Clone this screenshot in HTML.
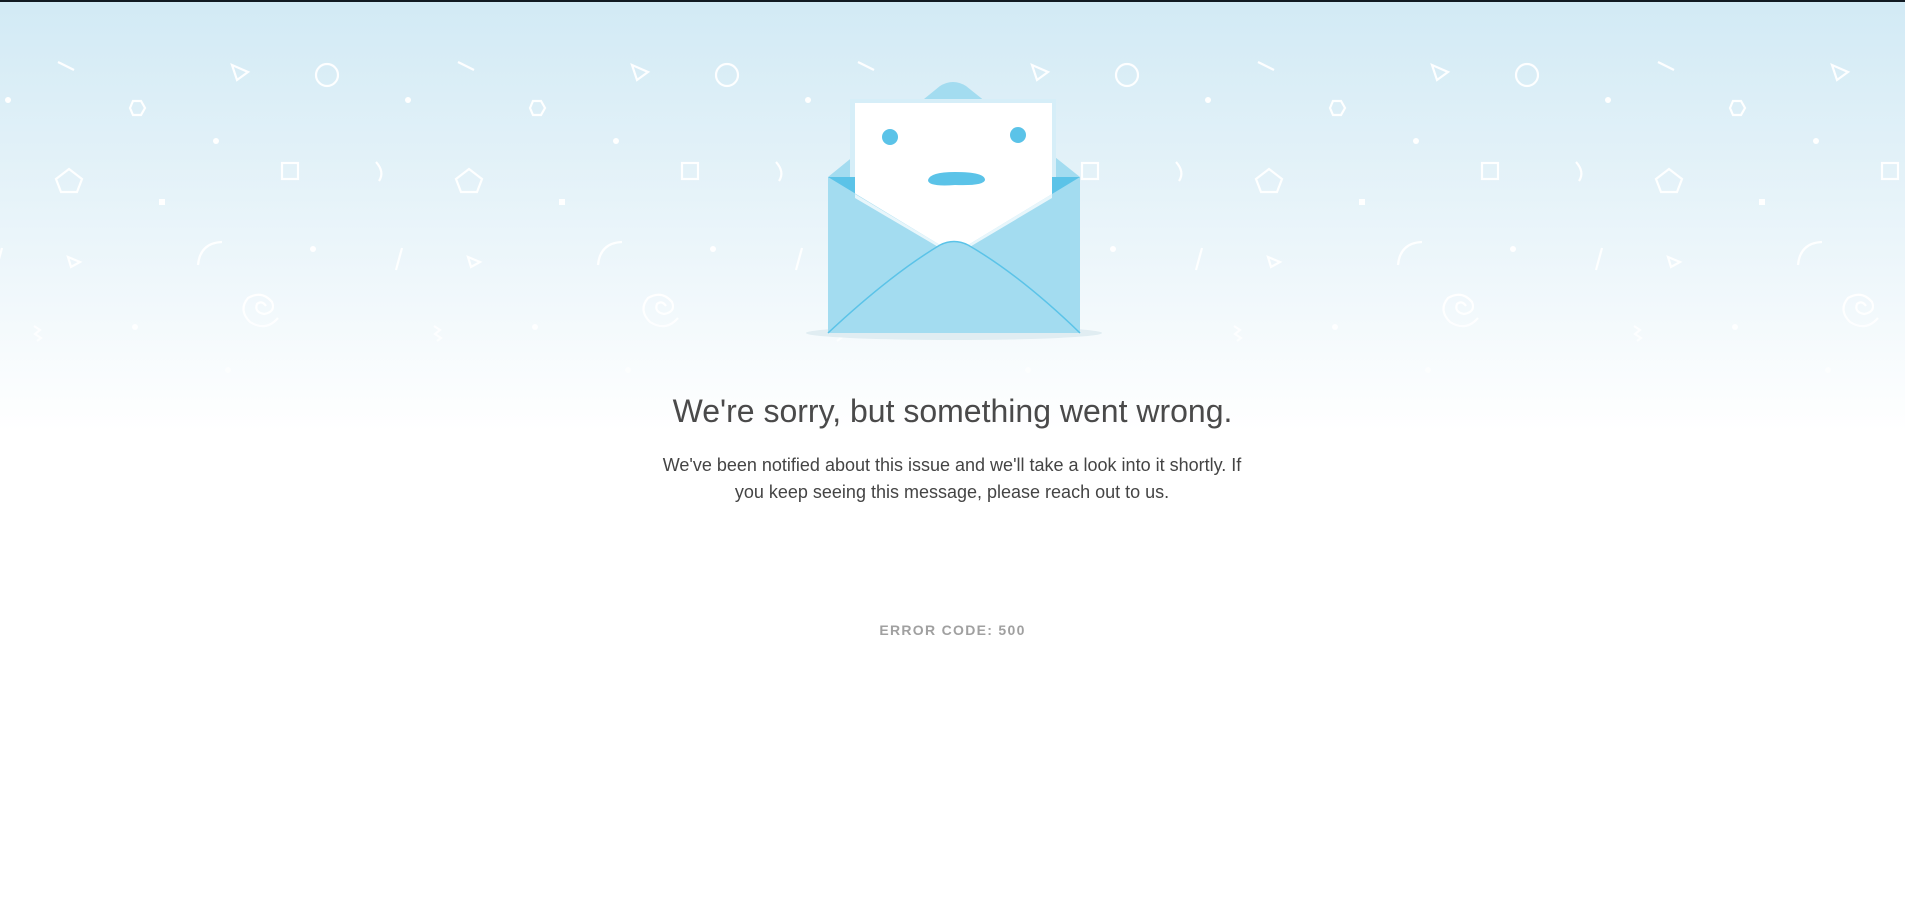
<!DOCTYPE html>
<html><head><meta charset="utf-8"><style>
html,body{margin:0;padding:0;width:1905px;height:904px;overflow:hidden;background:#fff;font-family:"Liberation Sans",Arial,sans-serif}
.top{position:absolute;left:0;top:0;width:1905px;height:2px;background:#111a22}
.bg{position:absolute;left:0;top:2px;width:1905px;height:430px;background:linear-gradient(#d2eaf5 0%,#e6f3f9 45%,#fff 100%)}
svg.p{position:absolute;left:0;top:0}
h1{position:absolute;left:0;width:1905px;top:393px;margin:0;text-align:center;font-weight:normal;font-size:32px;color:#4a4a4a}
p.m{position:absolute;left:652px;width:600px;top:452px;margin:0;text-align:center;font-size:18px;line-height:27px;color:#444}
.ec{position:absolute;left:0;width:1905px;top:622px;text-align:center;font-size:14px;font-weight:bold;letter-spacing:1.3px;color:#a0a0a0}
</style></head><body>
<div class="top"></div><div class="bg"></div>
<svg class="p" width="1905" height="440">
<defs><pattern id="t" width="400" height="440" patternUnits="userSpaceOnUse">
<g fill="none" stroke="#fff" stroke-width="2.2" opacity="0.95">
<line x1="58" y1="62" x2="74" y2="70"/>
<path d="M232 65 L248 72 L237 80 Z"/>
<circle cx="327" cy="75" r="11"/>
<path d="M130 108 L133 101 L141 101 L145 108 L141 115 L133 115 Z"/>
<path d="M69 169 L82 179 L77 192 L61 192 L56 179 Z"/>
<rect x="282" y="163" width="16" height="16"/>
<path d="M376 162 Q385 172 379 181"/>
<path d="M68 257 L80 262 L71 267 Z"/>
<path d="M198 265 Q200 243 222 242"/>
<line x1="402" y1="248" x2="396" y2="270"/>
<line x1="2" y1="248" x2="-4" y2="270"/>
<path d="M278 318 Q266 332 250 322 Q238 310 248 298 Q262 290 272 302 Q276 312 264 314 Q254 312 257 304 Q262 300 266 306"/>
<path d="M34 326 L40 330 L35 334 L41 338 L37 341"/>
</g>
<g fill="#fff">
<circle cx="8" cy="100" r="3"/><circle cx="408" cy="100" r="3"/>
<circle cx="216" cy="141" r="3"/>
<rect x="159" y="199" width="6" height="6"/>
<circle cx="313" cy="249" r="3"/>
<circle cx="135" cy="327" r="3"/>
<circle cx="228" cy="370" r="3"/>
</g>
</pattern>
<linearGradient id="f" x1="0" y1="0" x2="0" y2="1"><stop offset="0.7" stop-color="#fff" stop-opacity="1"/><stop offset="1" stop-color="#fff" stop-opacity="0"/></linearGradient>
<mask id="mk"><rect width="1905" height="440" fill="url(#f)"/></mask>
</defs>
<rect width="1905" height="440" fill="url(#t)" mask="url(#mk)"/>
</svg>
<svg class="p" width="1905" height="360">
<ellipse cx="954" cy="333" rx="148" ry="7" fill="#e0edf2"/>
<path d="M828 177 L940 86 Q953 78 966 86 L1080 177 Z" fill="#a3dcf0"/>
<rect x="850" y="99" width="206" height="80" fill="#d6eef8"/>
<path d="M828 177 L1080 177 L1080 200 L828 200 Z" fill="#5bc3e8"/>
<rect x="855" y="103" width="197" height="170" fill="#fff"/>
<circle cx="890" cy="137" r="8" fill="#5bc3e8"/>
<circle cx="1018" cy="135" r="8" fill="#5bc3e8"/>
<path d="M928 180 Q930 172 955 172 Q985 172 985 180 Q984 186 955 185 Q928 187 928 180 Z" fill="#5bc3e8"/>
<path d="M828 177 L940 245 L954 244 L968 245 L1080 177 L1080 333 L828 333 Z" fill="#a3dcf0"/>
<path d="M855 194 L940 245 L968 245 L1052 194 L1052 198 L968 248 L940 248 L855 198 Z" fill="#e8f6fb"/>
<path d="M828 333 Q890 275 940 245 Q954 238 968 245 Q1020 275 1080 333" fill="#a3dcf0" stroke="#5bc3e8" stroke-width="1.5"/>
</svg>
<h1>We're sorry, but something went wrong.</h1>
<p class="m">We've been notified about this issue and we'll take a look into it shortly. If you keep seeing this message, please reach out to us.</p>
<div class="ec">ERROR CODE: 500</div>
</body></html>
